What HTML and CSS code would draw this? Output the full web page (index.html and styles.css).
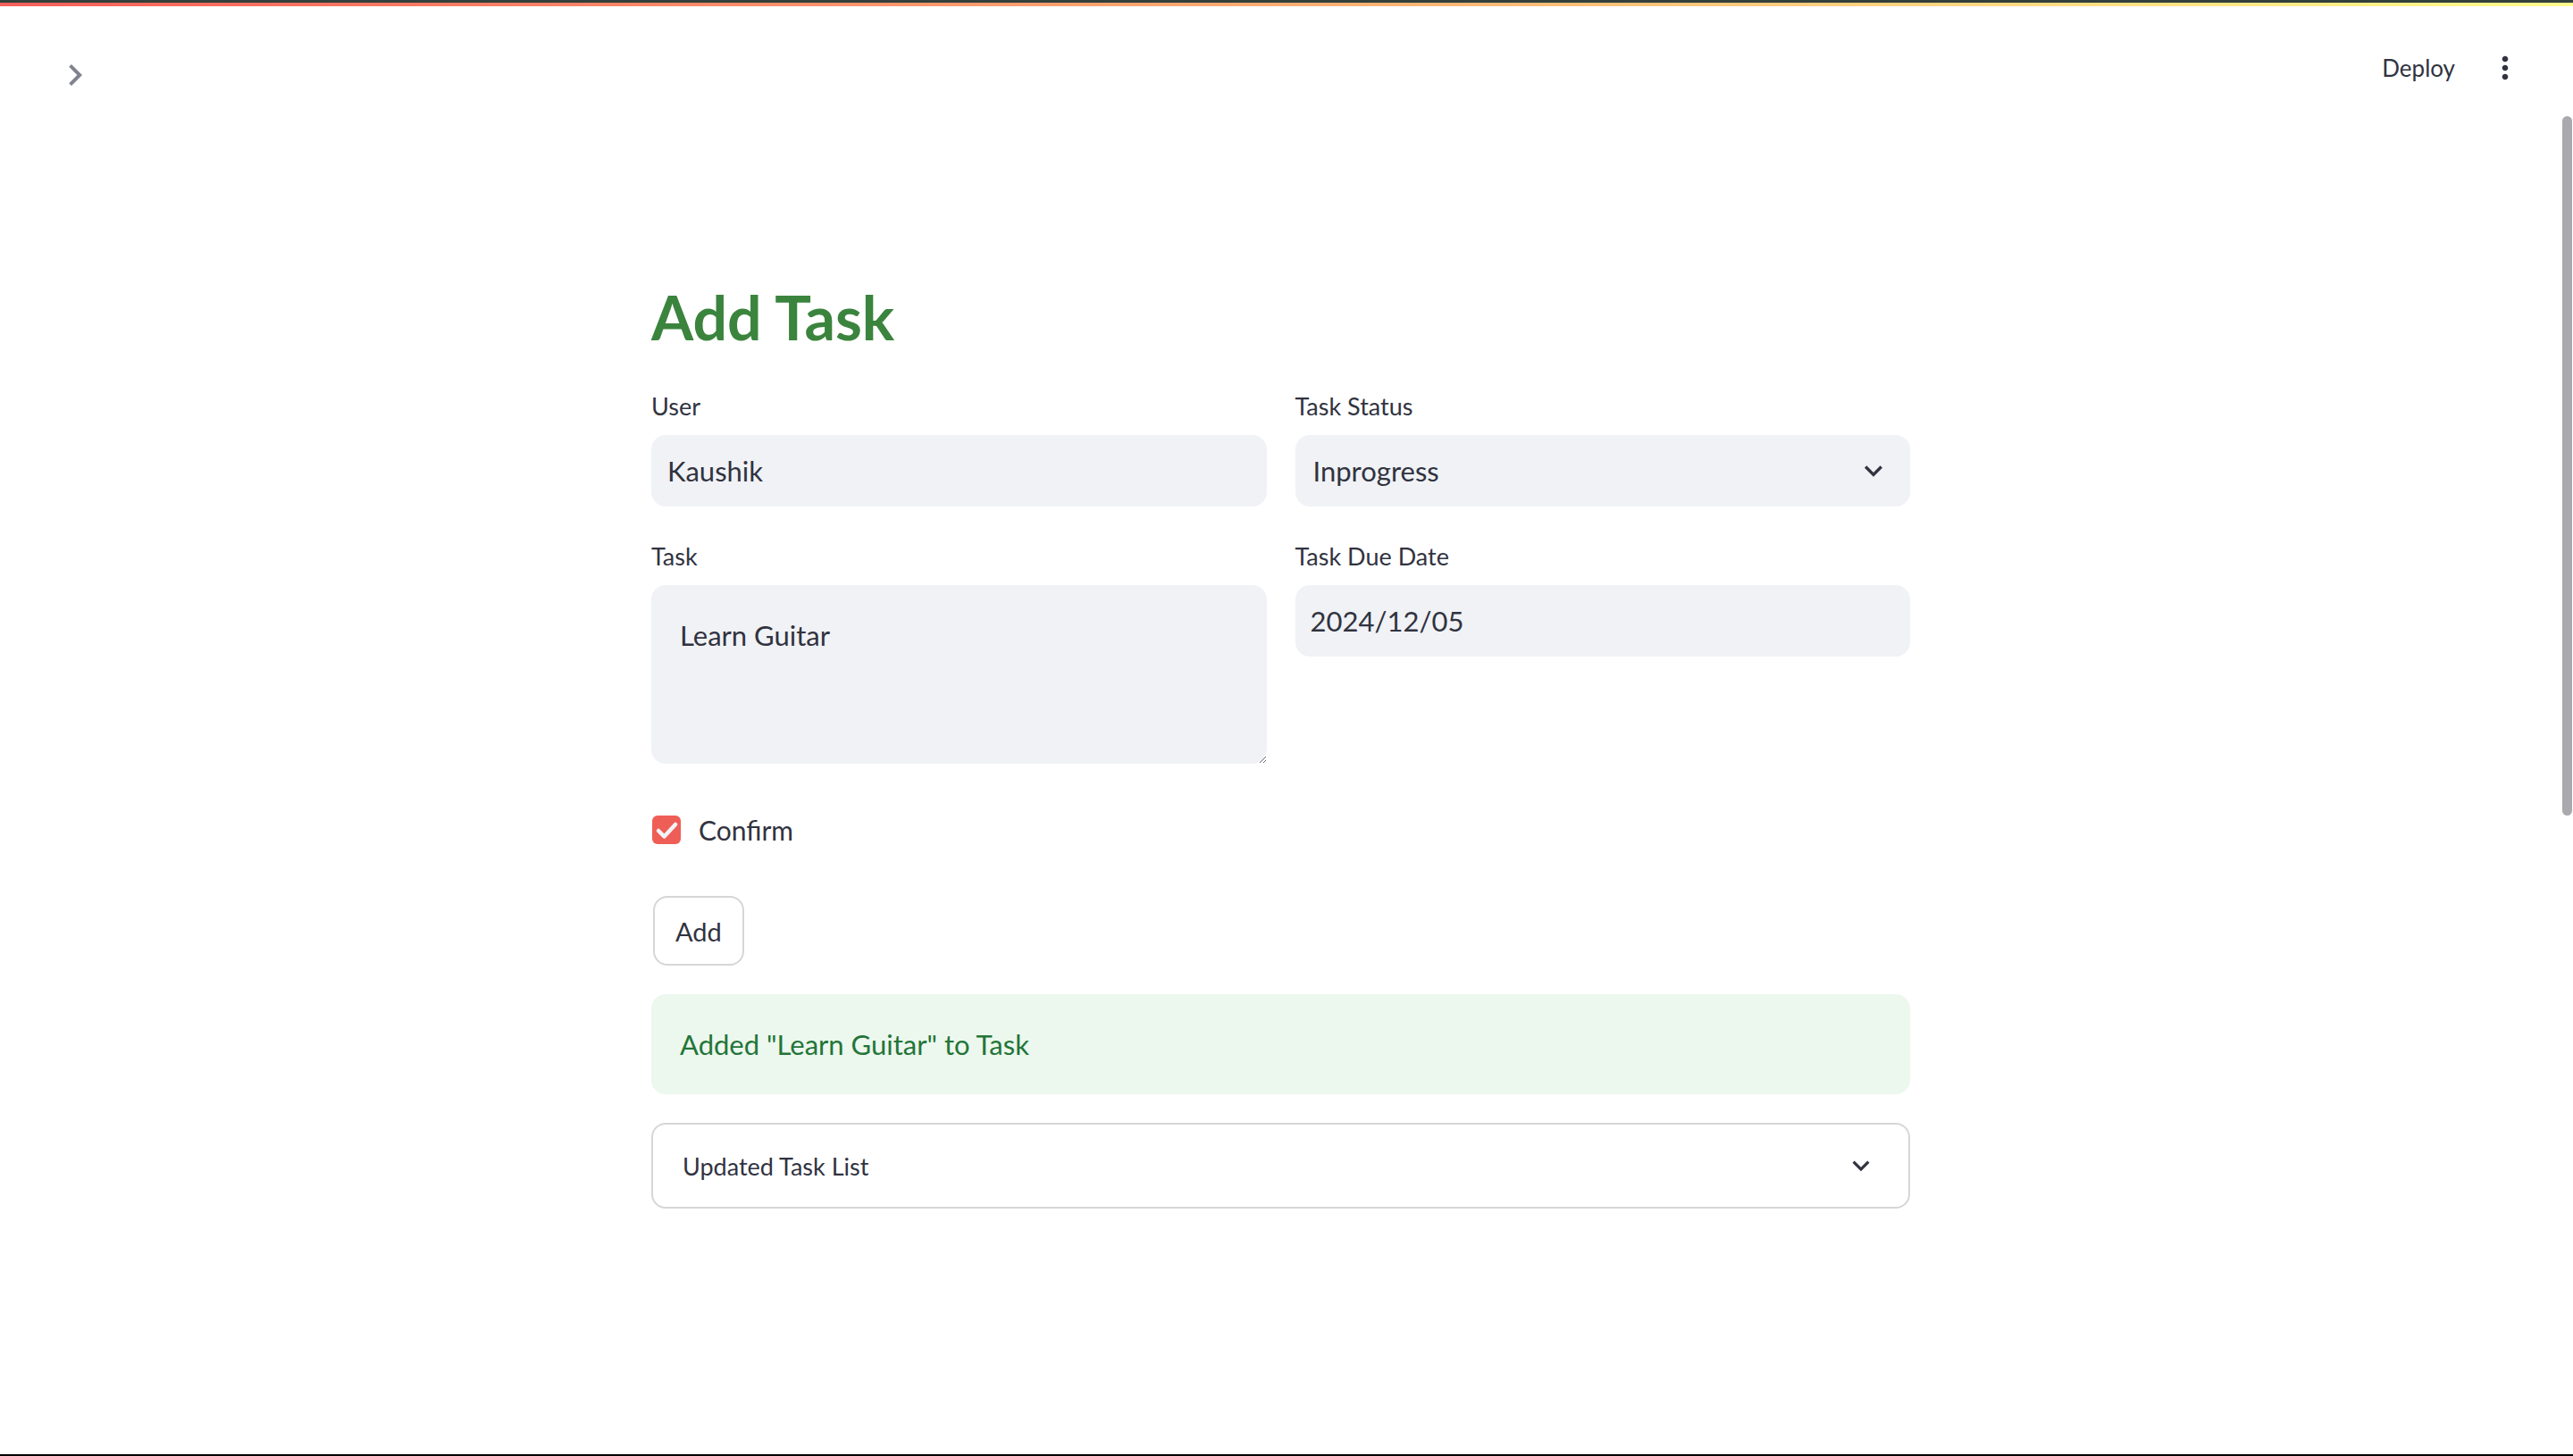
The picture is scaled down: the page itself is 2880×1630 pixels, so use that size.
FILE: index.html
```html
<!DOCTYPE html>
<html lang="en">
<head>
<meta charset="utf-8">
<title>Add Task</title>
<link rel="stylesheet" href="styles.css">
</head>
<body>
<div class="app">
  <div class="window-edge"></div>
  <div class="decoration"></div>
  <header class="header">
    <svg class="sidebar-toggle" viewBox="0 0 24 24" width="48" height="48" aria-hidden="true"><path d="M10 6L8.59 7.41 13.17 12l-4.58 4.59L10 18l6-6z" fill="currentColor"/></svg>
    <div class="toolbar">
      <span class="deploy">Deploy</span>
      <svg class="kebab" viewBox="0 0 24 24" width="40" height="40" aria-hidden="true"><path d="M12 8c1.1 0 2-.9 2-2s-.9-2-2-2-2 .9-2 2 .9 2 2 2zm0 2c-1.1 0-2 .9-2 2s.9 2 2 2 2-.9 2-2-.9-2-2-2zm0 6c-1.1 0-2 .9-2 2s.9 2 2 2 2-.9 2-2-.9-2-2-2z" fill="currentColor"/></svg>
    </div>
  </header>

  <main class="main">
    <h1 class="title">Add Task</h1>

    <div class="columns">
      <div class="column">
        <div class="field">
          <div class="label">User</div>
          <div class="input">Kaushik</div>
        </div>
        <div class="field">
          <div class="label">Task</div>
          <textarea class="textarea" readonly>Learn Guitar</textarea>
        </div>
      </div>
      <div class="column">
        <div class="field">
          <div class="label">Task Status</div>
          <div class="input select">
            <span>Inprogress</span>
            <svg class="select-chevron" viewBox="0 0 24 24" width="40" height="40" aria-hidden="true"><path d="M16.59 8.59L12 13.17 7.41 8.59 6 10l6 6 6-6z" fill="currentColor"/></svg>
          </div>
        </div>
        <div class="field">
          <div class="label">Task Due Date</div>
          <div class="input date">2024/12/05</div>
        </div>
      </div>
    </div>

    <div class="checkbox-row">
      <svg class="checkbox" viewBox="0 0 32 32" width="32" height="32" aria-hidden="true"><rect x="0" y="0" width="32" height="32" rx="6" fill="#ef5d57"/><path d="M7 17 L13.5 23.5 L26 10" fill="none" stroke="#f3f3f6" stroke-width="4.5" stroke-linecap="round" stroke-linejoin="round"/></svg>
      <span class="checkbox-label">Confirm</span>
    </div>

    <div class="button-row">
      <button class="btn" type="button">Add</button>
    </div>

    <div class="alert-success">Added "Learn Guitar" to Task</div>

    <div class="expander">
      <span class="expander-label">Updated Task List</span>
      <svg class="expander-chevron" viewBox="0 0 24 24" width="38" height="38" aria-hidden="true"><path d="M16.59 8.59L12 13.17 7.41 8.59 6 10l6 6 6-6z" fill="currentColor"/></svg>
    </div>
  </main>

  <div class="scroll-thumb"></div>
  <div class="bottom-edge"></div>
</div>
</body>
</html>
```

FILE: styles.css
```css
html, body {
  margin: 0;
  padding: 0;
  background: #ffffff;
}

body {
  font-family: Lato, "Noto Sans", sans-serif;
  color: #31333f;
  overflow: hidden;
}

.app {
  min-height: 1630px;
  padding-right: 13px;
  box-sizing: border-box;
}

.window-edge {
  height: 3px;
  margin-right: -13px;
  background: #33403b;
}

.decoration {
  height: 4px;
  margin-right: -13px;
  background: linear-gradient(90deg, #f6605b, #fffb8c);
}

.header {
  height: 120px;
  display: flex;
  justify-content: space-between;
  align-items: flex-start;
  margin-right: -13px;
}

.sidebar-toggle {
  display: block;
  margin: 53px 0 0 60px;
  color: #80838f;
}

.toolbar {
  display: flex;
  align-items: center;
  gap: 36px;
  margin-top: 49px;
  padding-right: 56px;
  height: 40px;
}

.deploy {
  font-size: 26px;
  line-height: 40px;
  color: #31333f;
}

.kebab {
  display: block;
  color: #31333f;
}

.main {
  width: 1409px;
  margin: 0 auto;
  padding-top: 187px;
  display: flex;
  flex-direction: column;
  gap: 32px;
}

.title {
  margin: 0 0 3px 0;
  font-size: 68px;
  font-weight: 700;
  line-height: 82px;
  height: 82px;
  color: #3b843e;
}

.columns {
  display: flex;
  gap: 32px;
}

.column {
  flex: 1 1 0;
  min-width: 0;
  display: flex;
  flex-direction: column;
  gap: 32px;
}

.field {
  display: flex;
  flex-direction: column;
}

.label {
  height: 48px;
  line-height: 48px;
  font-size: 27px;
  margin-bottom: 8px;
  color: #31333f;
}

.input {
  height: 80px;
  box-sizing: border-box;
  border-radius: 16px;
  background: #f0f2f6;
  padding: 0 18px;
  display: flex;
  align-items: center;
  font-size: 31px;
  color: #31333f;
}

.select {
  justify-content: space-between;
  padding: 0 21px 0 20px;
}

.select-chevron {
  display: block;
  color: #31333f;
}

.date {
  padding-left: 17px;
}

.textarea {
  display: block;
  width: 100%;
  height: 200px;
  box-sizing: border-box;
  border: none;
  outline: none;
  border-radius: 16px;
  background: #f0f2f6;
  padding: 32px 32px;
  margin: 0;
  font-family: Lato, "Noto Sans", sans-serif;
  font-size: 31px;
  line-height: 1.6;
  color: #31333f;
  resize: vertical;
}

.checkbox-row {
  height: 84px;
  display: flex;
  align-items: center;
  gap: 20px;
  padding-left: 1px;
}

.checkbox {
  display: block;
}

.checkbox-label {
  font-size: 30px;
  color: #31333f;
}

.button-row {
  display: flex;
}

.btn {
  height: 78px;
  margin-left: 2px;
  padding: 0 23px;
  border: 2px solid #d6d6d9;
  border-radius: 16px;
  background: #ffffff;
  font-family: Lato, "Noto Sans", sans-serif;
  font-size: 29px;
  color: #31333f;
}

.alert-success {
  height: 112px;
  box-sizing: border-box;
  border-radius: 16px;
  background: #ecf7ee;
  padding: 0 32px;
  display: flex;
  align-items: center;
  font-size: 31px;
  color: #237538;
}

.expander {
  height: 96px;
  box-sizing: border-box;
  border: 2px solid #d6d6d9;
  border-radius: 16px;
  padding: 0 34px 0 33px;
  display: flex;
  align-items: center;
  justify-content: space-between;
}

.expander-label {
  font-size: 27px;
  color: #31333f;
}

.expander-chevron {
  display: block;
  color: #31333f;
}

.scroll-thumb {
  position: fixed;
  top: 130px;
  right: 1px;
  width: 11px;
  height: 783px;
  border-radius: 6px;
  background: #a9a9ae;
}

.bottom-edge {
  position: fixed;
  left: 0;
  right: 0;
  bottom: 0;
  height: 2px;
  background: #000000;
}
```
